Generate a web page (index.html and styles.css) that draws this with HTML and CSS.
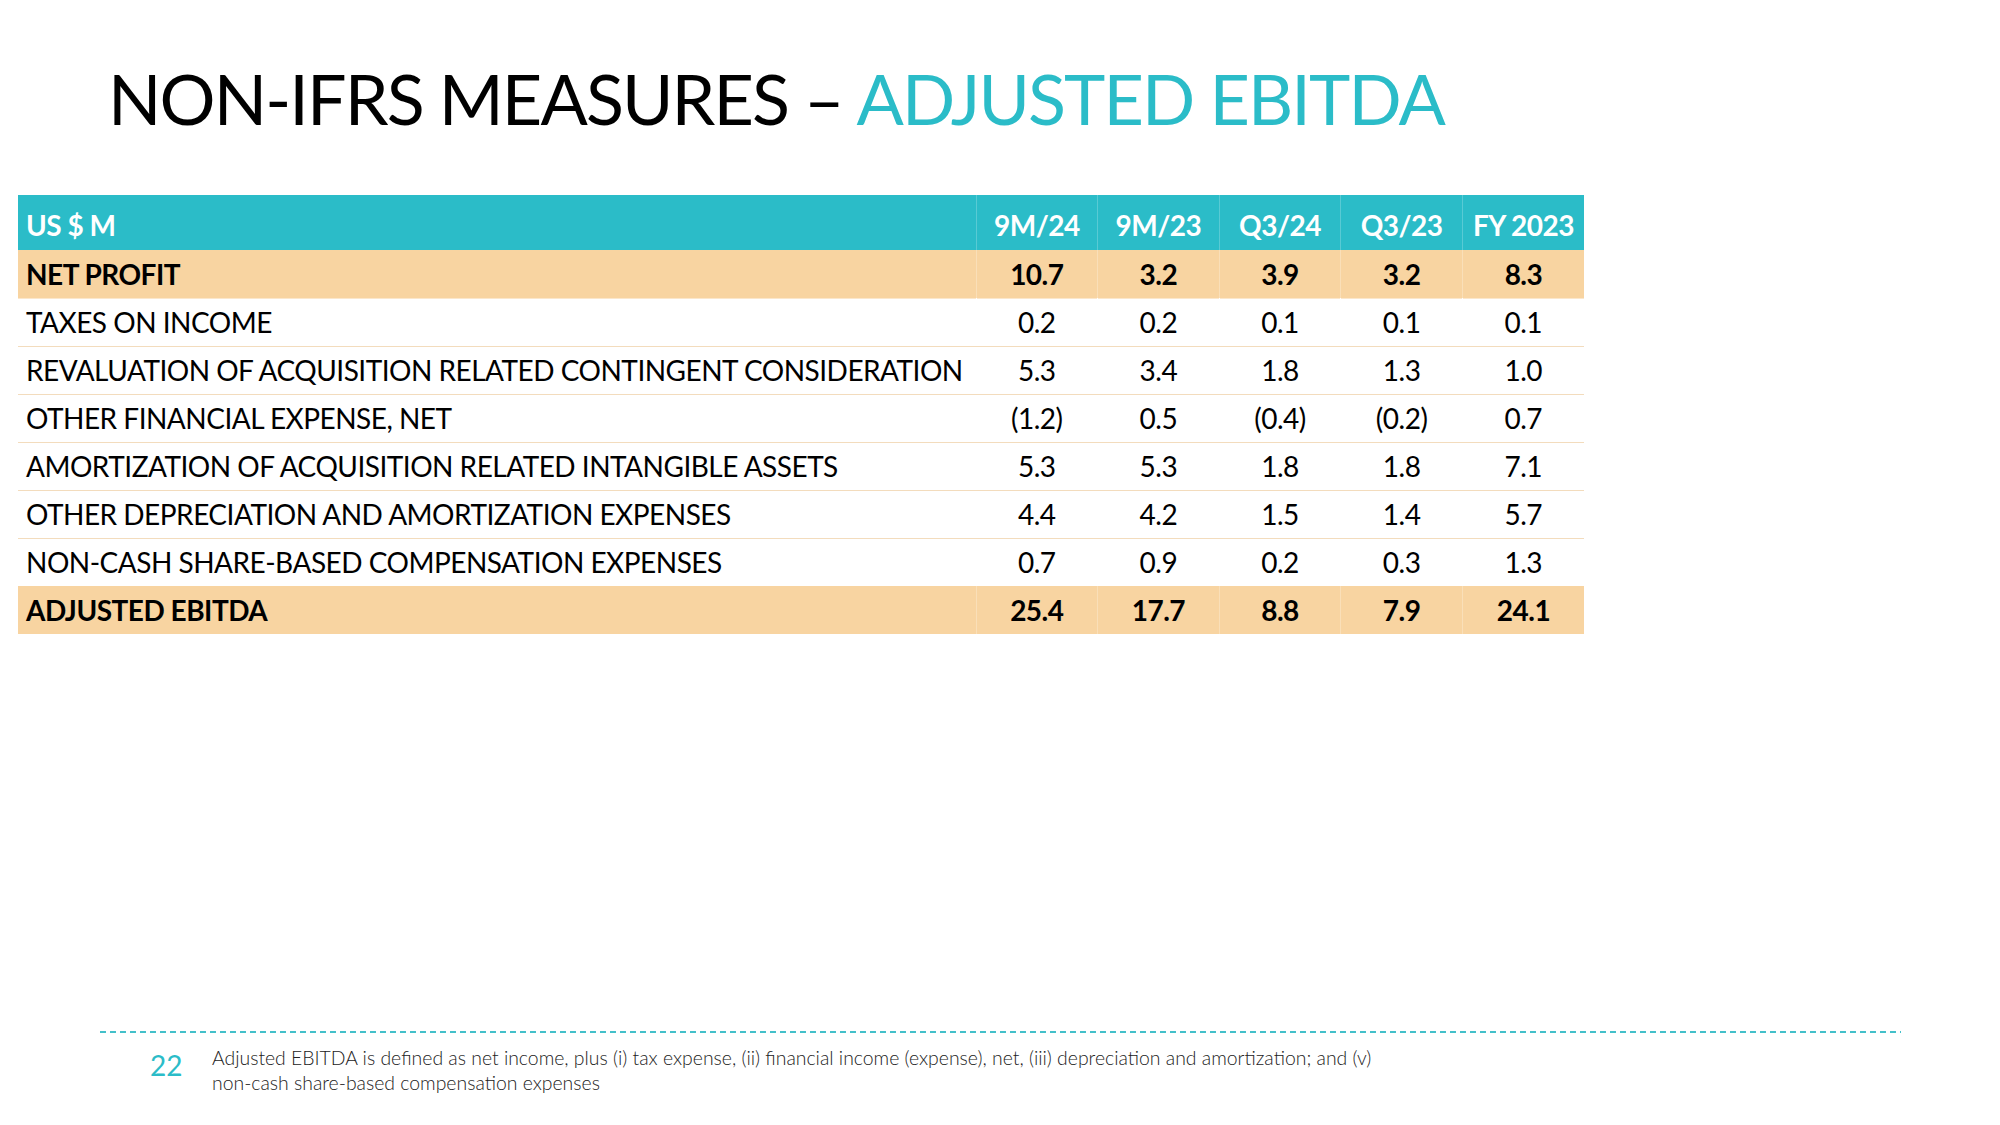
FILE: index.html
```html
<!DOCTYPE html>
<html lang="en">
<head>
<meta charset="utf-8">
<title>Non-IFRS Measures – Adjusted EBITDA</title>
<link rel="stylesheet" href="styles.css">
</head>
<body>
<div class="slide">
  <h1 class="title">NON-IFRS MEASURES – <span class="accent">ADJUSTED EBITDA</span></h1>
  <table class="fin">
    <colgroup>
      <col class="c-label"><col class="c-num"><col class="c-num"><col class="c-num"><col class="c-num"><col class="c-num">
    </colgroup>
    <thead>
      <tr class="head">
        <th class="label">US $ M</th><th>9M/24</th><th>9M/23</th><th>Q3/24</th><th>Q3/23</th><th>FY 2023</th>
      </tr>
    </thead>
    <tbody>
      <tr class="hl"><td class="label">NET PROFIT</td><td>10.7</td><td>3.2</td><td>3.9</td><td>3.2</td><td>8.3</td></tr>
      <tr><td class="label">TAXES ON INCOME</td><td>0.2</td><td>0.2</td><td>0.1</td><td>0.1</td><td>0.1</td></tr>
      <tr><td class="label">REVALUATION OF ACQUISITION RELATED CONTINGENT CONSIDERATION</td><td>5.3</td><td>3.4</td><td>1.8</td><td>1.3</td><td>1.0</td></tr>
      <tr><td class="label">OTHER FINANCIAL EXPENSE, NET</td><td>(1.2)</td><td>0.5</td><td>(0.4)</td><td>(0.2)</td><td>0.7</td></tr>
      <tr><td class="label">AMORTIZATION OF ACQUISITION RELATED INTANGIBLE ASSETS</td><td>5.3</td><td>5.3</td><td>1.8</td><td>1.8</td><td>7.1</td></tr>
      <tr><td class="label">OTHER DEPRECIATION AND AMORTIZATION EXPENSES</td><td>4.4</td><td>4.2</td><td>1.5</td><td>1.4</td><td>5.7</td></tr>
      <tr class="last-plain"><td class="label">NON-CASH SHARE-BASED COMPENSATION EXPENSES</td><td>0.7</td><td>0.9</td><td>0.2</td><td>0.3</td><td>1.3</td></tr>
      <tr class="hl"><td class="label">ADJUSTED EBITDA</td><td>25.4</td><td>17.7</td><td>8.8</td><td>7.9</td><td>24.1</td></tr>
    </tbody>
  </table>
  <div class="spacer"></div>
  <footer class="foot">
    <div class="dash"></div>
    <div class="note">
      <span class="pg">22</span>
      <p class="text">Adjusted EBITDA is defined as net income, plus (i) tax expense, (ii) financial income (expense), net, (iii) depreciation and amortization; and (v)<br>non-cash share-based compensation expenses</p>
    </div>
  </footer>
</div>
</body>
</html>
```
FILE: styles.css
```css
html, body {
  margin: 0;
  padding: 0;
  background: #ffffff;
}
body {
  font-family: "Lato", "Noto Sans", sans-serif;
  color: #000;
}
.slide {
  width: 2000px;
  height: 1125px;
  display: flex;
  flex-direction: column;
  box-sizing: border-box;
}
.title {
  margin: 62px 0 0 108px;
  font-size: 70px;
  line-height: 72px;
  font-weight: 400;
  color: #000;
  letter-spacing: -1.9px;
}
.accent {
  color: #2bbcc8;
}
.fin {
  margin: 61px 0 0 18px;
  width: 1566px;
  border-collapse: collapse;
  table-layout: fixed;
  font-size: 28px;
  letter-spacing: -0.5px;
}
.c-label { width: 958px; }
.c-num { width: 121.6px; }
.fin th, .fin td {
  padding: 0;
  text-align: center;
  white-space: nowrap;
}
.fin .label {
  text-align: left;
  padding-left: 8px;
}
.head {
  background: #2bbcc8;
  color: #fff;
  height: 55px;
}
.head th {
  font-weight: 700;
  padding-top: 4px;
  border-left: 1px solid rgba(255,255,255,0.22);
}
.head th.label { border-left: none; }
.fin tbody tr {
  height: 48px;
  border-bottom: 1px solid #f3dcbd;
}
.fin tbody tr.last-plain { border-bottom: none; }
.fin tbody tr.hl {
  background: #f8d4a1;
  font-weight: 700;
  border-bottom: none;
}
.fin tbody tr.hl td {
  border-left: 1px solid rgba(255,255,255,0.25);
}
.fin tbody tr.hl td.label { border-left: none; }
.fin tbody tr.hl + tr td { border-top: 1px solid #fbe7cc; }
.spacer { flex: 1; }
.foot {
  padding: 0 99px 0 100px;
  margin-bottom: 30px;
}
.dash {
  height: 2px;
  background: repeating-linear-gradient(to right, #43c0ca 0, #43c0ca 6px, transparent 6px, transparent 10px);
}
.note {
  display: flex;
  align-items: flex-start;
  margin-top: 12px;
}
.pg {
  width: 62px;
  padding-left: 50px;
  padding-top: 5px;
  font-size: 28px;
  line-height: 30px;
  color: #2bbcc8;
  flex: none;
}
.text {
  margin: 0;
  font-size: 19.4px;
  line-height: 25px;
  font-weight: 300;
  color: #222;
}
```
